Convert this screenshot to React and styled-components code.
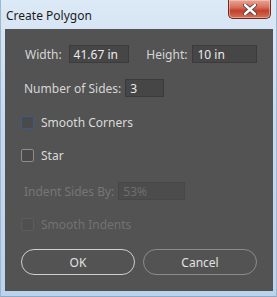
import styled, { createGlobalStyle } from 'styled-components';

const Global = createGlobalStyle`
  html, body {
    margin: 0;
    padding: 0;
    background: #c9dbef;
  }
  * {
    box-sizing: border-box;
  }
`;

const Frame = styled.div`
  width: 277px;
  height: 297px;
  display: flex;
  flex-direction: column;
  padding: 0 3px 5px 4px;
  background: linear-gradient(180deg, #dce9f6 0%, #c7daef 40%, #bcd3ec 100%);
  border-left: 1px solid #9fb6d0;
  border-right: 1px solid #9fb6d0;
  border-bottom: 1px solid #8ea7c3;
  font-family: 'Noto Sans', 'Open Sans', sans-serif;
`;

const TitleBar = styled.div`
  height: 29px;
  display: flex;
  align-items: flex-start;
  justify-content: space-between;
`;

const Title = styled.span`
  margin-top: 7px;
  margin-left: 1px;
  font-size: 12px;
  color: #1b1b1b;
`;

const CloseButton = styled.div`
  width: 43px;
  height: 19px;
  margin-right: 2px;
  display: flex;
  align-items: center;
  justify-content: center;
  border: 1px solid #6b2a22;
  border-top: none;
  border-radius: 0 0 5px 5px;
  background: linear-gradient(180deg, #e9a596 0%, #d9705d 40%, #c2402b 60%, #d4735a 100%);
  box-shadow: inset 0 0 0 1px rgba(255, 220, 210, 0.45);
`;

const Panel = styled.div`
  flex: 1;
  display: flex;
  flex-direction: column;
  gap: 16px;
  padding: 16px 16px 0 16px;
  background: #535353;
  color: #d8d8d8;
  font-size: 12px;
`;

const Row = styled.div`
  display: flex;
  align-items: center;
  height: ${(p) => p.$h || 18}px;
  margin-top: ${(p) => p.$shift || 0}px;
`;

const Label = styled.span`
  margin-left: ${(p) => p.$indent || 4}px;
  margin-right: ${(p) => p.$gap || 6}px;
  color: ${(p) => (p.$disabled ? '#767676' : '#d6d6d6')};
  white-space: nowrap;
`;

const Field = styled.div`
  width: ${(p) => p.$w}px;
  height: 18px;
  display: flex;
  align-items: center;
  padding-left: 4px;
  background: ${(p) => (p.$disabled ? '#4c4c4c' : '#464646')};
  border: 1px solid ${(p) => (p.$disabled ? '#474747' : '#3b3b3b')};
  color: ${(p) => (p.$disabled ? '#6e6e6e' : '#ececec')};
`;

const Box = styled.span`
  width: 13px;
  height: 13px;
  border-radius: 2px;
  border: 1px solid ${(p) => p.$tone};
  background: ${(p) => (p.$disabled ? '#505050' : '#4a4a4a')};
`;

const CheckText = styled.span`
  margin-left: 7px;
  color: ${(p) => (p.$disabled ? '#727272' : '#dadada')};
`;

const Buttons = styled.div`
  display: flex;
  gap: 8px;
`;

const Button = styled.div`
  width: 115px;
  height: 26px;
  border-radius: 13px;
  border: 1px solid ${(p) => (p.$primary ? '#cfcfcf' : '#8c8c8c')};
  display: flex;
  align-items: center;
  justify-content: center;
  color: #e2e2e2;
`;

const CloseIcon = () => (
  <svg width="14" height="11" viewBox="0 0 14 11">
    <path
      d="M2 1 L12 10 M12 1 L2 10"
      stroke="#3b3b3b"
      strokeWidth="4"
      strokeLinecap="round"
    />
    <path
      d="M2 1 L12 10 M12 1 L2 10"
      stroke="#ffffff"
      strokeWidth="2.4"
      strokeLinecap="round"
    />
  </svg>
);

const App = () => {
  return (
    <>
      <Global />
      <Frame>
        <TitleBar>
          <Title>Create Polygon</Title>
          <CloseButton>
            <CloseIcon />
          </CloseButton>
        </TitleBar>
        <Panel>
          <Row>
            <Label $gap={7}>Width:</Label>
            <Field $w={63}>41.67 in</Field>
            <Label $indent={17} $gap={5}>Height:</Label>
            <Field $w={67}>10 in</Field>
          </Row>
          <Row>
            <Label $indent={3} $gap={4}>Number of Sides:</Label>
            <Field $w={39}>3</Field>
          </Row>
          <Row>
            <Box $tone="#3d5a85" />
            <CheckText>Smooth Corners</CheckText>
          </Row>
          <Row $shift={-1}>
            <Box $tone="#8d8d8d" />
            <CheckText>Star</CheckText>
          </Row>
          <Row $shift={2}>
            <Label $indent={3} $gap={4} $disabled>
              Indent Sides By:
            </Label>
            <Field $w={67} $disabled>
              53%
            </Field>
          </Row>
          <Row $shift={-1}>
            <Box $tone="#5c5c5c" $disabled />
            <CheckText $disabled>Smooth Indents</CheckText>
          </Row>
          <Buttons>
            <Button $primary>OK</Button>
            <Button>Cancel</Button>
          </Buttons>
        </Panel>
      </Frame>
    </>
  );
};

export default App;
